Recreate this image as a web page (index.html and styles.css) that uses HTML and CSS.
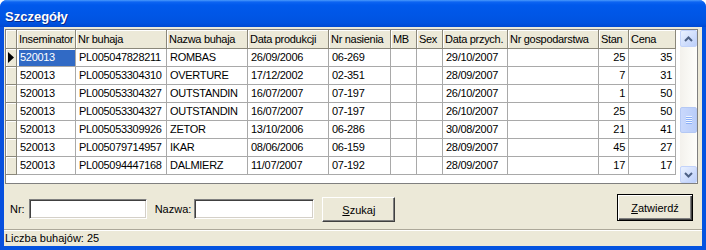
FILE: index.html
```html
<!DOCTYPE html>
<html lang="pl">
<head>
  <meta charset="UTF-8">
  <title>Szczegóły</title>
  <link rel="stylesheet" href="styles.css">
</head>
<body>
<div class="window">
  <div class="titlebar">Szczegóły</div>
  <div class="frame">
    <div class="grid">
      <div class="table">
        <div class="row head">
          <div class="cell ind"></div>
          <div class="cell">Inseminator</div>
          <div class="cell">Nr buhaja</div>
          <div class="cell">Nazwa buhaja</div>
          <div class="cell">Data produkcji</div>
          <div class="cell">Nr nasienia</div>
          <div class="cell">MB</div>
          <div class="cell">Sex</div>
          <div class="cell">Data przych.</div>
          <div class="cell">Nr gospodarstwa</div>
          <div class="cell">Stan</div>
          <div class="cell">Cena</div>
        </div>
        <div class="row">
          <div class="cell ind"><svg width="6" height="11" viewBox="0 0 6 11"><polygon points="0,0 6,5.5 0,11" fill="#000"/></svg></div>
          <div class="cell sel">520013</div>
          <div class="cell">PL005047828211</div>
          <div class="cell">ROMBAS</div>
          <div class="cell">26/09/2006</div>
          <div class="cell">06-269</div>
          <div class="cell"></div>
          <div class="cell"></div>
          <div class="cell">29/10/2007</div>
          <div class="cell"></div>
          <div class="cell num">25</div>
          <div class="cell num">35</div>
        </div>
        <div class="row">
          <div class="cell ind"></div>
          <div class="cell">520013</div>
          <div class="cell">PL005053304310</div>
          <div class="cell">OVERTURE</div>
          <div class="cell">17/12/2002</div>
          <div class="cell">02-351</div>
          <div class="cell"></div>
          <div class="cell"></div>
          <div class="cell">28/09/2007</div>
          <div class="cell"></div>
          <div class="cell num">7</div>
          <div class="cell num">31</div>
        </div>
        <div class="row">
          <div class="cell ind"></div>
          <div class="cell">520013</div>
          <div class="cell">PL005053304327</div>
          <div class="cell">OUTSTANDIN</div>
          <div class="cell">16/07/2007</div>
          <div class="cell">07-197</div>
          <div class="cell"></div>
          <div class="cell"></div>
          <div class="cell">26/10/2007</div>
          <div class="cell"></div>
          <div class="cell num">1</div>
          <div class="cell num">50</div>
        </div>
        <div class="row">
          <div class="cell ind"></div>
          <div class="cell">520013</div>
          <div class="cell">PL005053304327</div>
          <div class="cell">OUTSTANDIN</div>
          <div class="cell">16/07/2007</div>
          <div class="cell">07-197</div>
          <div class="cell"></div>
          <div class="cell"></div>
          <div class="cell">26/10/2007</div>
          <div class="cell"></div>
          <div class="cell num">25</div>
          <div class="cell num">50</div>
        </div>
        <div class="row">
          <div class="cell ind"></div>
          <div class="cell">520013</div>
          <div class="cell">PL005053309926</div>
          <div class="cell">ZETOR</div>
          <div class="cell">13/10/2006</div>
          <div class="cell">06-286</div>
          <div class="cell"></div>
          <div class="cell"></div>
          <div class="cell">30/08/2007</div>
          <div class="cell"></div>
          <div class="cell num">21</div>
          <div class="cell num">41</div>
        </div>
        <div class="row">
          <div class="cell ind"></div>
          <div class="cell">520013</div>
          <div class="cell">PL005079714957</div>
          <div class="cell">IKAR</div>
          <div class="cell">08/06/2006</div>
          <div class="cell">06-159</div>
          <div class="cell"></div>
          <div class="cell"></div>
          <div class="cell">28/09/2007</div>
          <div class="cell"></div>
          <div class="cell num">45</div>
          <div class="cell num">27</div>
        </div>
        <div class="row">
          <div class="cell ind"></div>
          <div class="cell">520013</div>
          <div class="cell">PL005094447168</div>
          <div class="cell">DALMIERZ</div>
          <div class="cell">11/07/2007</div>
          <div class="cell">07-192</div>
          <div class="cell"></div>
          <div class="cell"></div>
          <div class="cell">28/09/2007</div>
          <div class="cell"></div>
          <div class="cell num">17</div>
          <div class="cell num">17</div>
        </div>
      </div>
      <div class="scroll">
        <div class="sb-btn"><svg width="9" height="6" viewBox="0 0 9 6"><polyline points="1,5 4.5,1.5 8,5" fill="none" stroke="#4d6185" stroke-width="2"/></svg></div>
        <div class="sb-track"><div class="sb-thumb"></div></div>
        <div class="sb-btn"><svg width="9" height="6" viewBox="0 0 9 6"><polyline points="1,1 4.5,4.5 8,1" fill="none" stroke="#4d6185" stroke-width="2"/></svg></div>
      </div>
    </div>

    <div class="search">
      <label for="nr">Nr:</label><input type="text" id="nr" class="nr">
      <label for="nazwa" class="nazwa-label">Nazwa:</label><input type="text" id="nazwa" class="nazwa">
      <button class="btn"><u>S</u>zukaj</button>
      <button class="btn btn-default"><u>Z</u>atwierdź</button>
    </div>

    <div class="status">Liczba buhajów: 25</div>
  </div>
</div>
</body>
</html>
```
FILE: styles.css
```css
* {
  padding: 0;
  margin: 0;
  box-sizing: border-box;
}

body {
  background-color: #fff;
  font: 11px "Liberation Sans", Arial, sans-serif;
  color: #000;
}

.window {
  width: 706px;
  height: 250px;
  display: flex;
  flex-direction: column;
  background-color: #0055e5;
  border-radius: 7px 7px 0 0;
  overflow: hidden;
}

.titlebar {
  flex: none;
  height: 27px;
  padding: 6px 0 1px 5px;
  display: flex;
  align-items: center;
  font-size: 13px;
  font-weight: bold;
  color: #fff;
  text-shadow: 1px 1px #0a2a8c;
  background: linear-gradient(#4a9afc 0, #0d64f2 2px, #0059ec 5px, #0056e6 15px, #0052e0 23px, #0049d2 27px);
}

.frame {
  flex: 1;
  display: flex;
  flex-direction: column;
  background-color: #ece9d8;
  border: 4px solid #0453e0;
  border-top: 0;
  border-left-color: #0750de;
}

/* siatka danych */
.grid {
  flex: none;
  display: flex;
  height: 155px;
  margin: 2px 4px 0 1px;
  border: 1px solid #7f7f7f;
  background-color: #fff;
}

.table {
  flex: 1;
  overflow: hidden;
}

.row {
  display: grid;
  grid-template-columns: 11px 59px 91px 81px 81px 62px 26px 26px 65px 91px 30px 47px;
  height: 18px;
}

.cell {
  padding: 0 3px;
  line-height: 17px;
  letter-spacing: -0.3px;
  white-space: nowrap;
  overflow: hidden;
  border-right: 1px solid #a9a9a9;
  border-bottom: 1px solid #a9a9a9;
}

.head {
  height: 19px;
}

.head .cell {
  padding-left: 2px;
  line-height: 18px;
  background-color: #ece9d8;
  border-color: #8a877a;
  box-shadow: inset 1px 1px #fff;
}

.ind {
  padding: 0;
  display: flex;
  align-items: center;
  justify-content: center;
  background-color: #ece9d8;
  border-color: #8a877a;
  box-shadow: inset 1px 1px #fff;
}

.num {
  text-align: right;
}

.sel {
  background-color: #316ac5;
  color: #fff;
  box-shadow: inset 2px 1px #fff;
}

/* pasek przewijania */
.scroll {
  flex: none;
  width: 17px;
  display: flex;
  flex-direction: column;
  background: linear-gradient(90deg, #f3f1ec, #fefefb);
}

.sb-btn {
  flex: none;
  height: 17px;
  display: flex;
  align-items: center;
  justify-content: center;
  border: 1px solid #c3d3fa;
  border-radius: 2px;
  background: linear-gradient(135deg, #eaf1ff, #bccffa);
}

.sb-track {
  flex: 1;
  padding-top: 60px;
}

.sb-thumb {
  height: 26px;
  display: flex;
  align-items: center;
  justify-content: center;
  border: 1px solid #b4c8f4;
  border-radius: 2px;
  background: linear-gradient(90deg, #c9d8fc, #b9cdf9);
}

.sb-thumb::before {
  content: "";
  width: 6px;
  height: 8px;
  background: repeating-linear-gradient(#eef4fe 0, #eef4fe 1px, #8cb0f8 1px, #8cb0f8 2px);
}

/* wyszukiwanie */
.search {
  flex: none;
  height: 45px;
  display: flex;
  align-items: flex-start;
  padding-left: 6px;
}

.search label {
  margin-top: 15px;
  margin-right: 4px;
  line-height: 20px;
}

.search .nazwa-label {
  margin-left: 8px;
  margin-right: 3px;
}

input[type=text] {
  margin-top: 15px;
  height: 20px;
  background-color: #fff;
  border: 1px solid;
  border-color: #808080 #fff #fff #808080;
  box-shadow: inset 1px 1px #404040, inset -1px -1px #d4d0c8;
  font: inherit;
  outline: none;
}

.nr {
  width: 118px;
}

.nazwa {
  width: 120px;
}

.btn {
  margin-top: 13px;
  margin-left: 8px;
  width: 73px;
  height: 25px;
  background-color: #ece9d8;
  border: 1px solid;
  border-color: #fff #404040 #404040 #fff;
  box-shadow: inset -1px -1px #808080;
  font: inherit;
  color: #000;
}

.btn-default {
  margin-top: 10px;
  margin-left: auto;
  margin-right: 9px;
  width: 76px;
  height: 27px;
  border-color: #000;
  box-shadow: inset 1px 1px #fff, inset -1px -1px #404040, inset -2px -2px #808080;
}

.status {
  flex: 1;
  padding: 1px 0 0 1px;
  line-height: 15px;
  border-top: 1px solid #aca899;
  box-shadow: inset 0 1px #fff;
}
```
